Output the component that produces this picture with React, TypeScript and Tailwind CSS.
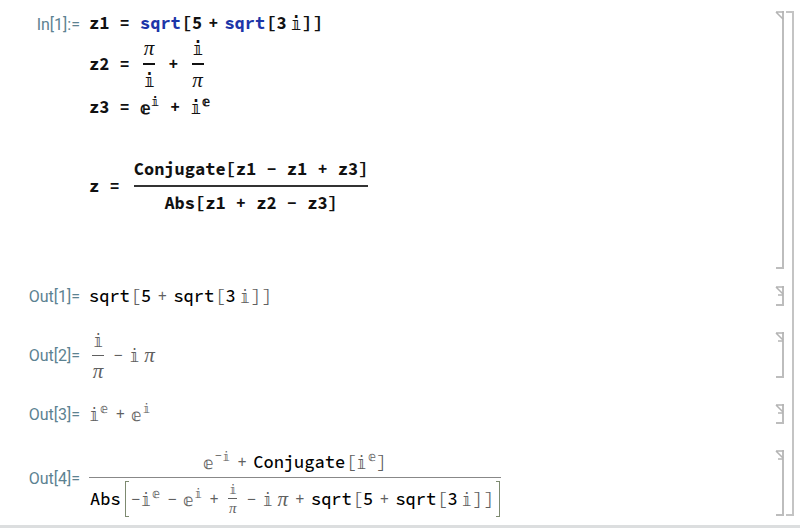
import type { ReactNode } from "react";

type Props = { children: ReactNode };

// Notebook row: label, expression and the cell bracket on the right
function Cell({
  label,
  className,
  labelClass = "",
  children,
}: Props & { label: string; className: string; labelClass?: string }) {
  return (
    <section className={`flex items-center ${className}`}>
      <Label className={labelClass}>{label}</Label>
      <div className="flex-1 flex items-center text-[#606060]">{children}</div>
      <Bracket output />
    </section>
  );
}

function Label({ children, className = "" }: Props & { className?: string }) {
  return (
    <span
      className={`w-20 mr-[9px] pt-[2px] shrink-0 text-right text-base leading-6 font-['Roboto',sans-serif] text-[#5c8291] ${className}`}
    >
      {children}
    </span>
  );
}

function Bracket({ output = false }: { output?: boolean }) {
  return (
    <div className="self-stretch w-2 shrink-0 border-r-2 border-b-2 border-[#bdbdbd]">
      <svg width="8" height="12" viewBox="0 0 8 12" fill="none" stroke="#b4b4b4" strokeWidth="1.5" className="overflow-visible">
        <path d="M0 1H8M0 1L7 8" />
        {output && <path d="M2 9H7" />}
      </svg>
    </div>
  );
}

function I() {
  return <span className="font-['Noto_Sans_CJK_SC','DejaVu_Sans_Mono',monospace]">𝕚</span>;
}

function E() {
  return <span className="font-['Noto_Sans_CJK_SC','DejaVu_Sans_Mono',monospace]">𝕖</span>;
}

function Pi({ small = false }: { small?: boolean }) {
  return (
    <span
      className={`text-center italic font-normal font-['Liberation_Serif',serif] ${
        small ? "w-2 text-[15px]" : "w-3 text-[21px]"
      }`}
    >
      π
    </span>
  );
}

function Sup({ children }: Props) {
  return <sup className="static mb-3 mx-px flex text-[13px] leading-3">{children}</sup>;
}

function Op({ children }: Props) {
  return <span className="mx-1.5">{children}</span>;
}

function Br({ children }: Props) {
  return <span className="ml-px">{children}</span>;
}

function Frac({
  top,
  bottom,
  bar = "h-px min-w-3",
  className = "",
}: {
  top: ReactNode;
  bottom: ReactNode;
  bar?: string;
  className?: string;
}) {
  return (
    <span className={`flex flex-col items-center mx-[3px] ${className}`}>
      <span className="flex">{top}</span>
      <span className={`self-stretch my-[3px] bg-current ${bar}`} />
      <span className="flex">{bottom}</span>
    </span>
  );
}

// Black names and digits inside the grey output
function B({ children }: Props) {
  return <span className="text-black font-medium">{children}</span>;
}

function Blue({ children }: Props) {
  return <span className="text-[#1c35a8]">{children}</span>;
}

function SqrtOut() {
  return (
    <span className="flex items-center">
      <B>sqrt</B>
      <Br>[</Br>
      <B>5</B>
      <Op>+</Op>
      <B>sqrt</B>
      <Br>[</Br>
      <B>3</B>
      <span className="ml-1 flex"><I /></span>
      <Br>]</Br>
      <Br>]</Br>
    </span>
  );
}

export default function App() {
  return (
    <main className="bg-white border-b-[3px] border-[#dcdedf] pt-[11px] pb-[9px] text-[17px] leading-6 font-['Source_Code_Pro','DejaVu_Sans_Mono',monospace]">
      <div className="flex pr-[6px] gap-[2px]">
        <div className="flex-1">
          <section className="flex">
            <Label>In[1]:=</Label>
            <div className="flex-1 pb-[54px] font-bold text-[#111] whitespace-pre">
              <div className="flex items-center">
                {"z1 = "}
                <Blue>sqrt</Blue>
                <Br>[</Br>5
                <Op>+</Op>
                <Blue>sqrt</Blue>
                <Br>[</Br>3
                <span className="ml-1 flex"><I /></span>
                <Br>]</Br>
                <Br>]</Br>
              </div>
              <div className="flex items-center h-[58px] mb-[2px]">
                {"z2 = "}
                <Frac top={<Pi />} bottom={<I />} bar="h-[2px] min-w-3" />
                {" + "}
                <Frac top={<I />} bottom={<Pi />} bar="h-[2px] min-w-3" />
              </div>
              <div className="flex items-center mb-[38px]">
                {"z3 = "}<E /><Sup><I /></Sup>{" + "}<I /><Sup><E /></Sup>
              </div>
              <div className="flex items-center">
                {"z = "}
                <span className="ml-1 flex flex-col items-center">
                  <span>Conjugate[z1 − z1 + z3]</span>
                  <span className="self-stretch h-[2px] my-1 bg-[#333]" />
                  <span>Abs[z1 + z2 − z3]</span>
                </span>
              </div>
            </div>
            <Bracket />
          </section>

          <div className="mt-[17px] flex flex-col gap-[26px]">
            <Cell label="Out[1]=" className="h-5">
              <SqrtOut />
            </Cell>

            <Cell label="Out[2]=" className="h-[46px]">
              <Frac top={<I />} bottom={<Pi />} />
              <Op>−</Op>
              <I />
              <span className="ml-1 flex"><Pi /></span>
            </Cell>

            <Cell label="Out[3]=" className="h-5">
              <I /><Sup><E /></Sup>
              <Op>+</Op>
              <E /><Sup><I /></Sup>
            </Cell>

            {/* label lines up with the main fraction bar */}
            <Cell label="Out[4]=" className="h-[66px]" labelClass="pb-2.5">
              <span className="flex flex-col items-center">
                <span className="flex items-center">
                  <E /><Sup>−<I /></Sup>
                  <Op>+</Op>
                  <B>Conjugate</B>
                  <Br>[</Br>
                  <I /><Sup><E /></Sup>
                  ]
                </span>
                <span className="self-stretch h-px my-[3px] bg-[#888]" />
                <span className="flex items-center px-px">
                  <B>Abs</B>
                  <span className="ml-1 flex items-center h-9 px-[6px] relative">
                    <span className="absolute inset-y-0 left-0 w-1 border border-r-0 border-[#7d8a70]" />
                    −<I /><Sup><E /></Sup>
                    <Op>−</Op>
                    <E /><Sup><I /></Sup>
                    <Op>+</Op>
                    <Frac
                      top={<I />}
                      bottom={<Pi small />}
                      bar="h-px min-w-[9px]"
                      className="text-[13px] leading-3"
                    />
                    <Op>−</Op>
                    <I />
                    <span className="ml-1 flex"><Pi /></span>
                    <Op>+</Op>
                    <SqrtOut />
                    <span className="absolute inset-y-0 right-0 w-1 border border-l-0 border-[#7d8a70]" />
                  </span>
                </span>
              </span>
            </Cell>
          </div>
        </div>
        <div className="w-2 border-2 border-l-0 border-[#c4c4c4]" />
      </div>
    </main>
  );
}
